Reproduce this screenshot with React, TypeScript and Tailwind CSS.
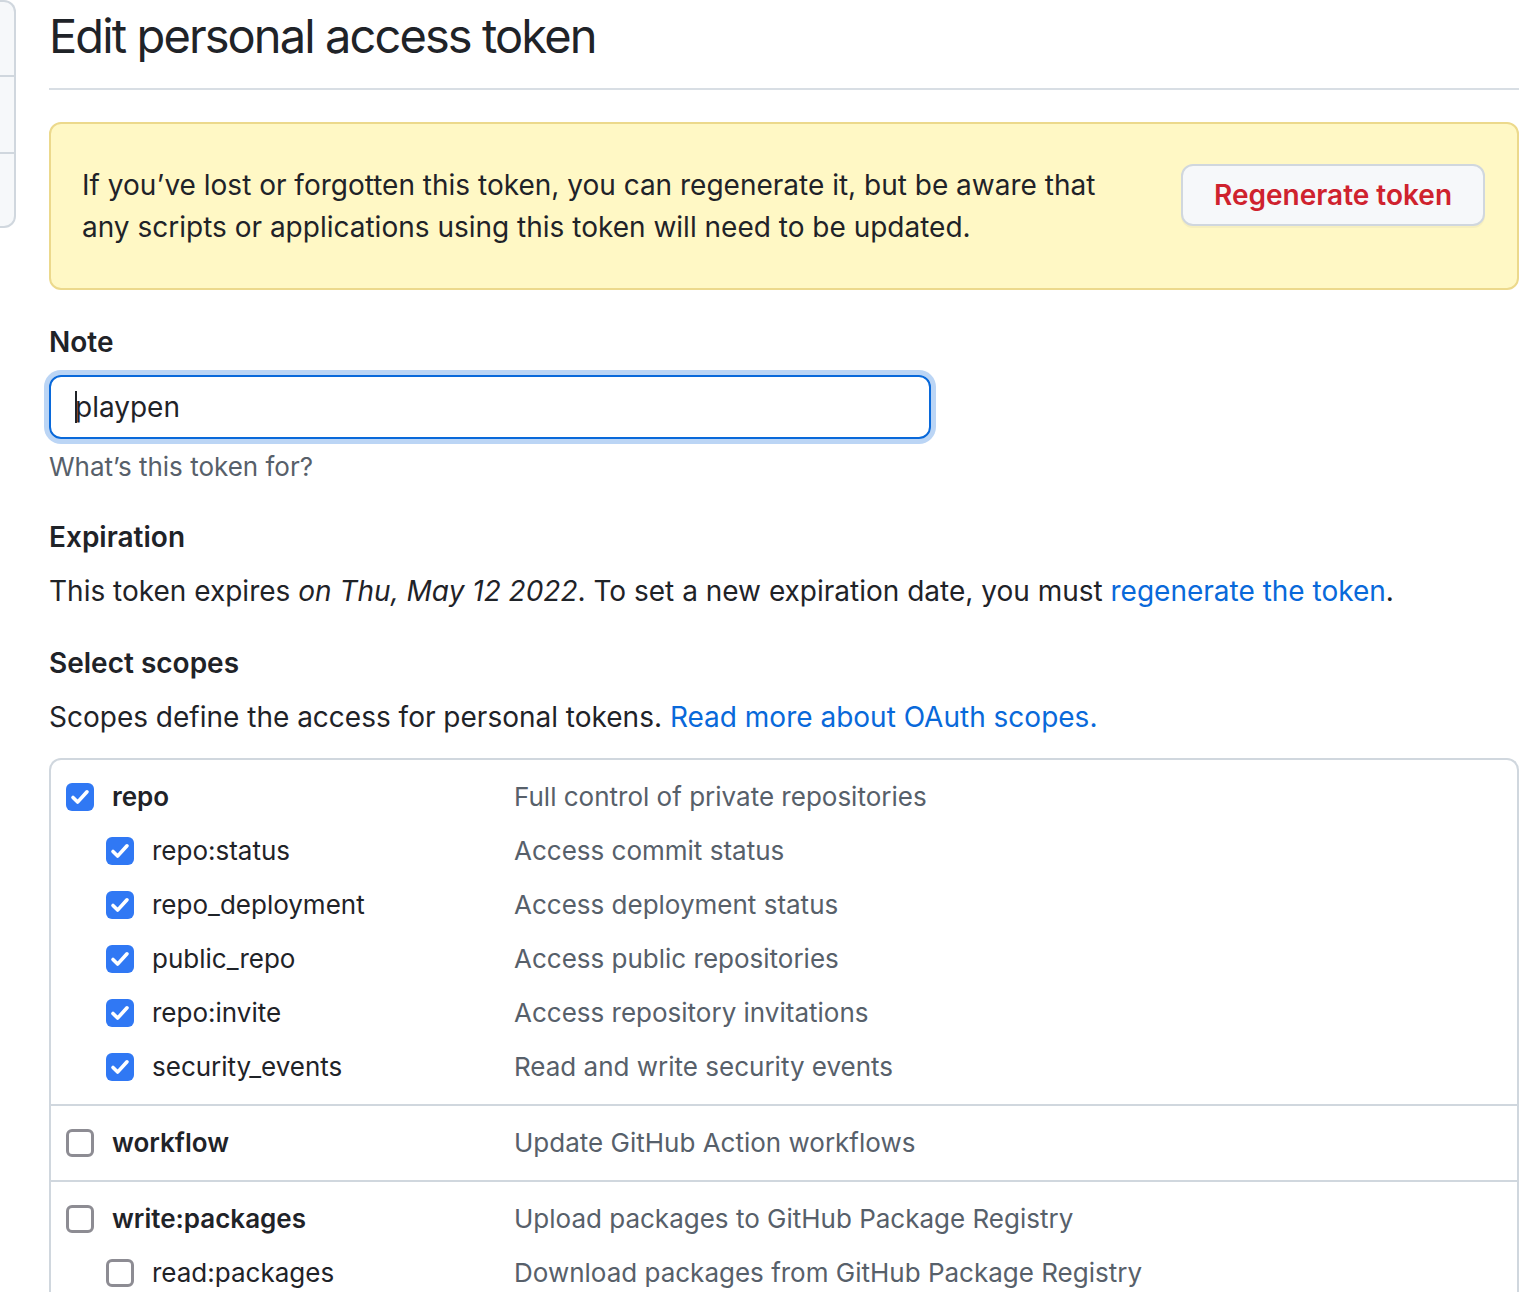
import React from 'react';

interface Scope {
  name: string;
  desc: string;
  checked: boolean;
  child?: boolean;
}

const groups: Scope[][] = [
  [
    { name: 'repo', desc: 'Full control of private repositories', checked: true },
    { name: 'repo:status', desc: 'Access commit status', checked: true, child: true },
    { name: 'repo_deployment', desc: 'Access deployment status', checked: true, child: true },
    { name: 'public_repo', desc: 'Access public repositories', checked: true, child: true },
    { name: 'repo:invite', desc: 'Access repository invitations', checked: true, child: true },
    { name: 'security_events', desc: 'Read and write security events', checked: true, child: true },
  ],
  [{ name: 'workflow', desc: 'Update GitHub Action workflows', checked: false }],
  [
    { name: 'write:packages', desc: 'Upload packages to GitHub Package Registry', checked: false },
    { name: 'read:packages', desc: 'Download packages from GitHub Package Registry', checked: false, child: true },
  ],
];

function Checkbox({ checked }: { checked: boolean }) {
  if (checked) {
    return (
      <span className="flex h-[28px] w-[28px] shrink-0 items-center justify-center rounded-[6px] bg-[#3078f4]">
        <svg width="28" height="28" viewBox="0 0 28 28" fill="none">
          <path d="M7 14.5l4.6 4.6L21 8.8" stroke="white" strokeWidth="3.6" strokeLinecap="round" strokeLinejoin="round" />
        </svg>
      </span>
    );
  }
  return <span className="h-[28px] w-[28px] shrink-0 rounded-[6px] border-[3px] border-[#8d8c93] bg-white" />;
}

function ScopeRow({ scope }: { scope: Scope }) {
  return (
    <div className="grid h-[54px] grid-cols-[448px_1fr] items-center pl-[15px] text-[26px]">
      <div className={`flex items-center gap-[18px] ${scope.child ? 'pl-[40px]' : ''}`}>
        <Checkbox checked={scope.checked} />
        <span className={scope.child ? 'text-[#1f2328]' : 'font-semibold text-[#1f2328]'}>{scope.name}</span>
      </div>
      <span className="text-[#57606a]">{scope.desc}</span>
    </div>
  );
}

export default function App() {
  return (
    <div className="flex min-h-[1292px] bg-white font-['Inter','Liberation_Sans',sans-serif] text-[28px] leading-[42px] text-[#1f2328]">
      {/* cut-off settings menu */}
      <div className="shrink-0 self-start">
        <div className="w-[16px] overflow-hidden rounded-r-[12px] border-2 border-l-0 border-[#d0d7de] bg-[#f6f8fa]">
          <div className="h-[75px] border-b-2 border-[#d0d7de]" />
          <div className="h-[77px] border-b-2 border-[#d0d7de]" />
          <div className="h-[72px]" />
        </div>
      </div>

      <div className="ml-[33px] w-[1470px]">
        <div className="border-b-2 border-[#d8dee4] pt-[6px] pb-[22px]">
          <h1 className="text-[47px] leading-[60px] font-normal tracking-[-1.9px] text-[#1f2328]">Edit personal access token</h1>
        </div>

        <div className="mt-[32px] flex items-start justify-between rounded-[12px] border-2 border-[#ecd98c] bg-[#fff8c5] py-[40px] pr-[32px] pl-[31px]">
          <p>
            <span className="block">If you’ve lost or forgotten this token, you can regenerate it, but be aware that</span>
            <span className="block">any scripts or applications using this token will need to be updated.</span>
          </p>
          <button className="h-[62px] w-[304px] rounded-[12px] border-2 border-[#d0d7de] bg-[#f6f8fa] font-semibold text-[#cf222e] shadow-[0_2px_0_rgba(31,35,40,0.04)]">
            Regenerate token
          </button>
        </div>

        <div className="mt-[31px] font-semibold">Note</div>
        <div className="mt-[12px] flex h-[64px] w-[882px] items-center rounded-[12px] border-2 border-[#0969da] pl-[24px] shadow-[0_0_0_5px_rgba(9,105,218,0.28)]">
          <span className="mr-[-2px] inline-block h-[32px] w-[2px] bg-[#1f2328]" />
          <span>playpen</span>
        </div>
        <div className="mt-[8px] text-[26px] leading-[40px] text-[#57606a]">What’s this token for?</div>

        <div className="mt-[29px] font-semibold">Expiration</div>
        <p className="mt-[12px]">
          This token expires <em>on Thu, May 12 2022</em>. To set a new expiration date, you must{' '}
          <a className="text-[#0969da]">regenerate the token</a>.
        </p>

        <div className="mt-[30px] font-semibold">Select scopes</div>
        <p className="mt-[12px]">
          Scopes define the access for personal tokens. <a className="text-[#0969da]">Read more about OAuth scopes.</a>
        </p>

        <div className="mt-[20px] rounded-t-[12px] border-2 border-b-0 border-[#d0d7de]">
          {groups.map((g, i) => (
            <div key={i} className={`py-[10px] ${i > 0 ? 'border-t-2 border-[#d0d7de]' : ''}`}>
              {g.map((s) => (
                <ScopeRow key={s.name} scope={s} />
              ))}
            </div>
          ))}
        </div>
      </div>
    </div>
  );
}
